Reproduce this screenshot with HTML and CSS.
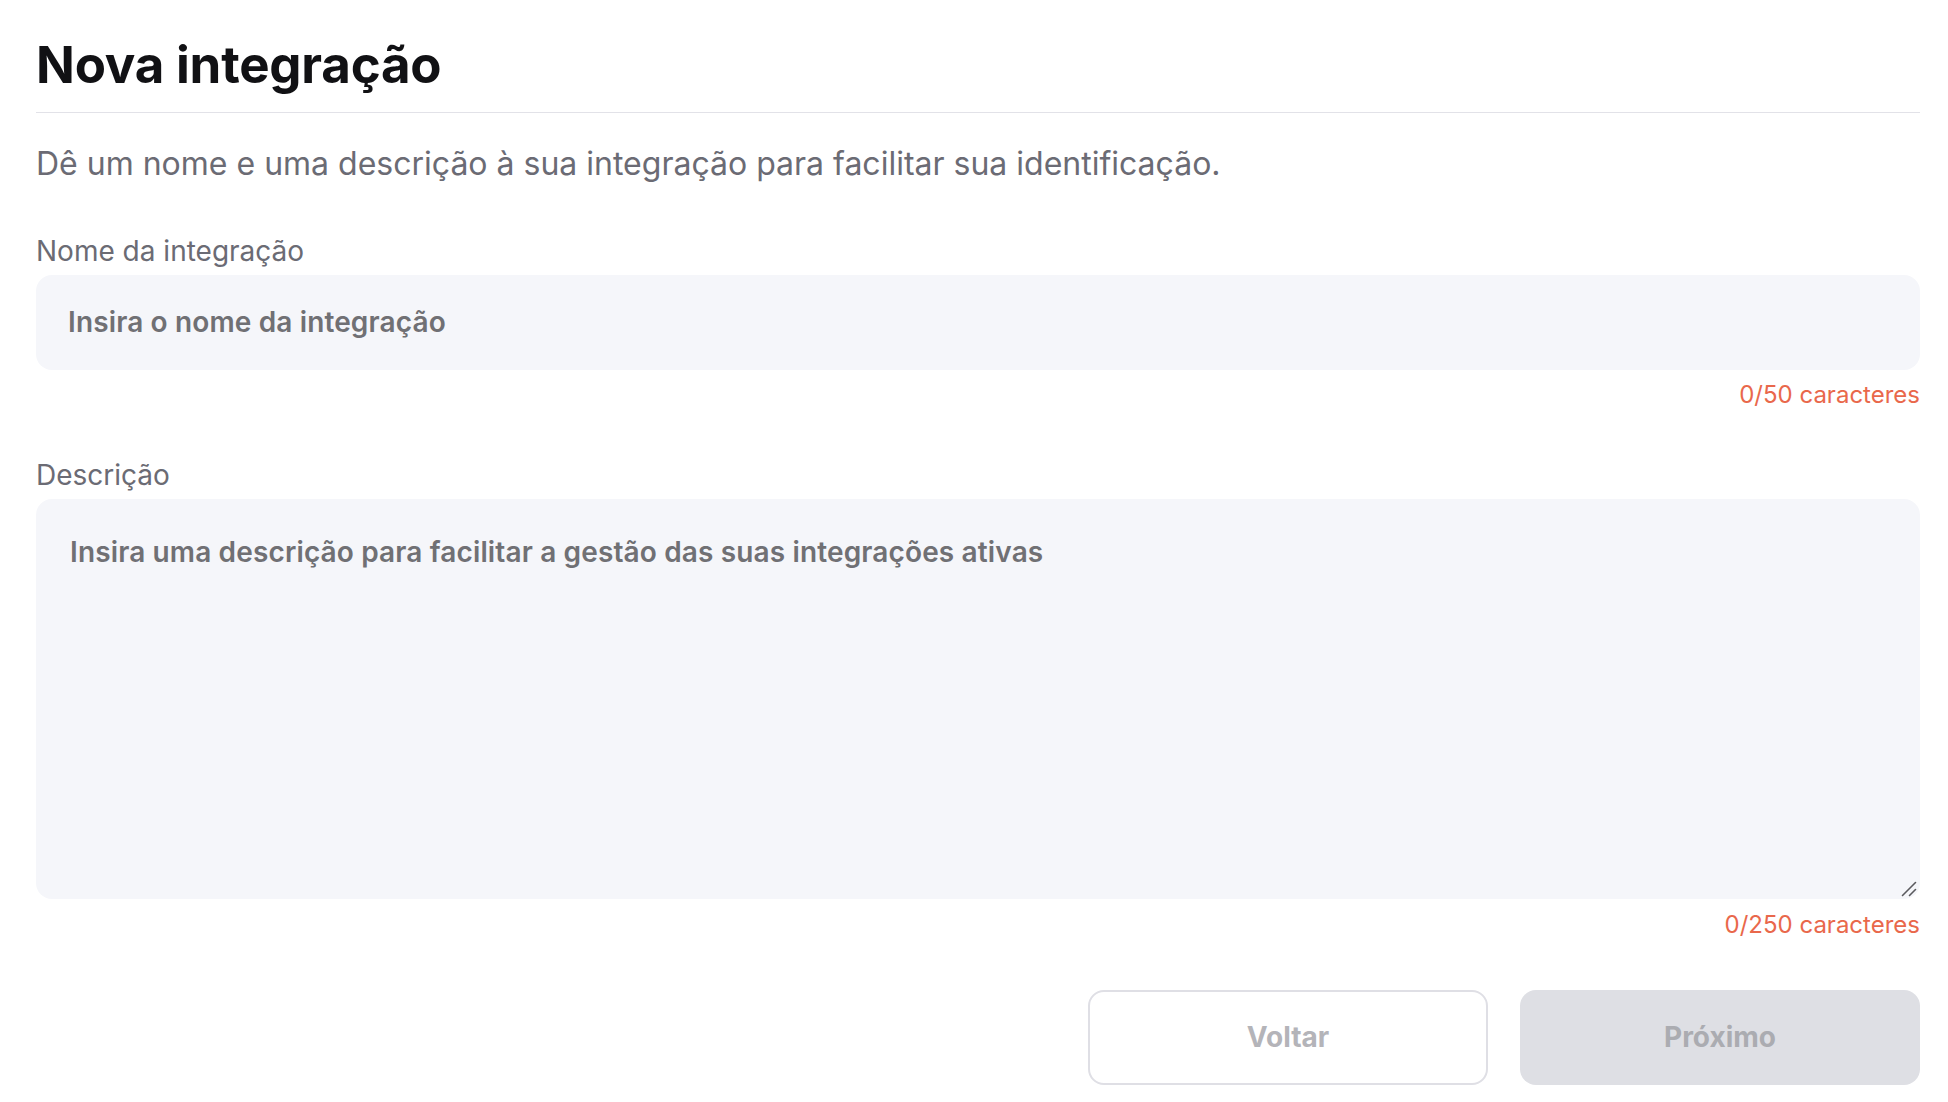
FILE: index.html
```html
<!DOCTYPE html>
<html lang="pt-BR">
<head>
<meta charset="utf-8">
<title>Nova integração</title>
<link rel="stylesheet" href="styles.css">
</head>
<body>
<main class="page">
  <header class="page-header">
    <h1 class="title">Nova integração</h1>
  </header>
  <p class="intro">Dê um nome e uma descrição à sua integração para facilitar sua identificação.</p>

  <form class="form">
    <div class="field">
      <label class="label" for="nome">Nome da integração</label>
      <input class="input" id="nome" type="text" placeholder="Insira o nome da integração">
      <div class="counter">0/50 caracteres</div>
    </div>

    <div class="field field-desc">
      <label class="label" for="desc">Descrição</label>
      <div class="textarea-wrap">
        <textarea class="textarea" id="desc" placeholder="Insira uma descrição para facilitar a gestão das suas integrações ativas"></textarea>
        <svg class="resizer" width="16" height="16" viewBox="0 0 16 16" aria-hidden="true">
          <line x1="1.5" y1="14.5" x2="14.5" y2="1.5" />
          <line x1="8.5" y1="14.5" x2="14.5" y2="8.5" />
        </svg>
      </div>
      <div class="counter counter-desc">0/250 caracteres</div>
    </div>

    <div class="actions">
      <button type="button" class="btn btn-outline">Voltar</button>
      <button type="button" class="btn btn-filled" disabled>Próximo</button>
    </div>
  </form>
</main>
</body>
</html>
```

FILE: styles.css
```css
* {
  box-sizing: border-box;
}

html, body {
  margin: 0;
  padding: 0;
  background: #ffffff;
}

body {
  font-family: "Inter", "Noto Sans", sans-serif;
  color: #111114;
}

.page {
  padding: 36px 28px 0 36px;
}

.page-header {
  border-bottom: 1px solid #e2e2e8;
  padding-bottom: 18px;
}

.title {
  margin: 0;
  font-size: 51px;
  line-height: 57.6px;
  font-weight: 700;
  letter-spacing: -0.2px;
  color: #111114;
}

.intro {
  margin: 30px 0 0;
  font-size: 32px;
  line-height: 42px;
  color: #6b6b74;
}

.form {
  display: flex;
  flex-direction: column;
  margin-top: 50px;
}

.field {
  display: flex;
  flex-direction: column;
}

.field-desc {
  margin-top: 48px;
}

.label {
  font-size: 28px;
  line-height: 32px;
  color: #6b6b74;
  margin-bottom: 8px;
}

.input,
.textarea {
  width: 100%;
  border: none;
  outline: none;
  background: #f5f6fa;
  border-radius: 16px;
  font-family: "Inter", "Noto Sans", sans-serif;
  font-size: 28px;
  font-weight: 600;
  letter-spacing: 0.14px;
  color: #333338;
}

.input {
  height: 95px;
  padding: 0 32px;
}

.textarea-wrap {
  position: relative;
}

.textarea {
  height: 400px;
  padding: 35px 34px;
  line-height: 36px;
  resize: none;
  display: block;
}

.resizer {
  position: absolute;
  right: 3px;
  bottom: 2px;
  pointer-events: none;
}

.resizer line {
  stroke: #5a5a5e;
  stroke-width: 1.6;
  stroke-linecap: round;
}

.input::placeholder,
.textarea::placeholder {
  color: #707074;
  opacity: 1;
}

.counter {
  align-self: flex-end;
  margin-top: 9px;
  font-size: 24px;
  line-height: 32px;
  color: #e9684b;
}

.counter-desc {
  margin-top: 10px;
}

.actions {
  display: flex;
  justify-content: flex-end;
  gap: 32px;
  margin-top: 49px;
}

.btn {
  width: 400px;
  height: 95px;
  border-radius: 16px;
  font-family: "Inter", "Noto Sans", sans-serif;
  font-size: 28px;
  font-weight: 700;
  cursor: pointer;
}

.btn-outline {
  background: #ffffff;
  border: 2px solid #dfdfe5;
  color: #b4b4b9;
}

.btn-filled {
  background: #dedfe4;
  border: none;
  color: #abacb1;
}
```
